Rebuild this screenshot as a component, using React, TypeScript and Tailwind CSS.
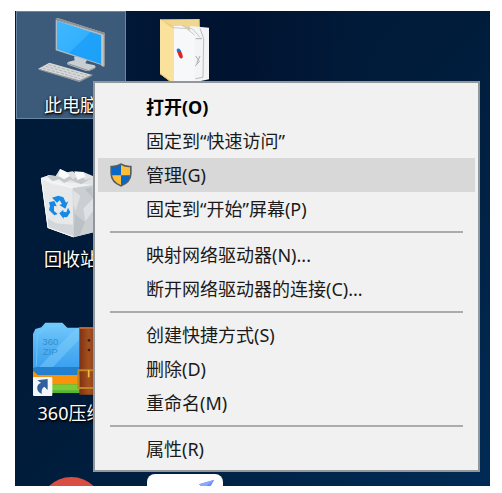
import type { ReactNode } from "react";

function ComputerIcon() {
  return (
    <svg viewBox="93 42 240 240" className="size-20" aria-hidden="true">
      <defs>
        <linearGradient id="screen" x1="0" y1="0" x2="1" y2="1">
          <stop offset="0" stopColor="#3fb8ff" />
          <stop offset="0.5" stopColor="#35b0fd" />
          <stop offset="0.52" stopColor="#1ea2fb" />
          <stop offset="1" stopColor="#1ba0f8" />
        </linearGradient>
      </defs>
      <path d="M222 170 L236 166 L262 178 L256 190 L284 196 Q290 202 282 207 L268 212 Q260 214 250 210 L204 194 Q198 189 206 185 L224 181Z" fill="#c9ced3" />
      <path d="M204 191 L266 212 L286 203" fill="none" stroke="#8b9298" strokeWidth="3" />
      <path d="M166 57 L173 54 L315 99 L315 198 L309 200 L303 196 L303 106Z" fill="#c3c4c4" />
      <path d="M166 57 L173 54 L315 99 L315 198 L311 199 L311 104Z" fill="#8e9194" />
      <path d="M167 59 L306 103 L306 196 L167 151Z" fill="#aebcc6" />
      <path d="M171 63 L303 106 L303 192 L171 148Z" fill="url(#screen)" />
      <path d="M115 206 L148 188 L277 225 L238 245Z" fill="#d8d9da" />
      <path d="M115 206 L238 241 L277 223 L277 227 L238 246 L115 209Z" fill="#92979b" />
      <g stroke="#aeb2b5" strokeWidth="3" strokeDasharray="10 4" fill="none">
        <path d="M145 194 L262 226" />
        <path d="M137 199 L252 231" />
        <path d="M128 204 L240 236" />
      </g>
    </svg>
  );
}

function FolderIcon() {
  return (
    <svg viewBox="435 42 240 240" className="size-20" aria-hidden="true">
      <path d="M480 58 L599 57 L600 90 L520 250 L480 222Z" fill="#e9cc7c" />
      <path d="M486 60 L596 60 L596 85 L522 80Z" fill="#f0d68f" />
      <path d="M570 78 L627 83 L627 238 L570 250Z" fill="#f2f4f6" />
      <path d="M600 85 L611 116 L609 232 L586 236" fill="none" stroke="#b8bec4" strokeWidth="3" />
      <path d="M587 116 H606 M587 168 L598 184 L586 198 M600 168 L590 190" fill="none" stroke="#a6acb1" strokeWidth="3" />
      <path d="M521 78 L545 77 L584 101 L584 248 L521 252Z" fill="#f7f8f9" />
      <path d="M521 83 L560 86 L584 105 M545 76 L578 87 L600 112" stroke="#c7cbce" strokeWidth="3" fill="none" />
      <path d="M480 58 L522 88 L522 254 L480 221Z" fill="#fbe29c" />
      <path d="M480 221 L522 252" stroke="#d8b65d" strokeWidth="3" />
      <ellipse cx="537" cy="154" rx="6" ry="9" fill="#2475cf" transform="rotate(-25 537 154)" />
      <ellipse cx="541" cy="164" rx="6" ry="12" fill="#df2420" transform="rotate(-20 541 164)" />
    </svg>
  );
}

function RecycleBinIcon() {
  return (
    <svg viewBox="63 54 240 240" className="size-20" aria-hidden="true">
      <path d="M93 84 L116 76 L137 78 L150 57 L171 67 L188 64 L204 75 L220 66 L247 77 L290 96 L278 240 L190 262 L113 233Z" fill="#dfe1e3" />
      <path d="M93 84 L116 76 L137 78 L160 95 L250 105 L290 96 L286 118 L188 116 L98 104Z" fill="#eff0f1" />
      <path d="M112 78 L127 94 L147 88 L163 99 L181 89 L213 103 L246 84 L225 90 L214 74 L188 87 L171 68 L154 82 L137 78Z" fill="#c3c8cb" />
      <path d="M150 57 L146 78 L162 88 L180 78 L171 67Z M193 64 L202 90 L226 80 L220 66Z" fill="#f9fafa" />
      <path d="M93 84 L120 101 L188 114 L191 261 L113 233Z" fill="#e6e8e9" />
      <path d="M188 114 L285 100 L278 240 L190 262Z" fill="#cbcfd2" />
      <path d="M189 121 L211 137 L197 183 L190 164Z M220 176 L258 136 L253 177 L226 214Z" fill="#dfe2e4" />
      <path d="M194 191 L225 216 L210 254 L191 261Z M224 117 L245 111 L249 143Z" fill="#bbc2c6" />
      <path d="M113 205 L137 220 L188 224 L190 262 L113 233Z" fill="#d3d7da" />
      <path d="M94 85 L114 233 L190 260 M94 85 L188 114" stroke="#fafafa" strokeWidth="3" fill="none" />
      <g fill="#1688e5">
        <path d="M126 143 L145 137 L160 142 L168 158 L175 154 L166 176 L148 165 L156 162 L149 151 L141 158Z" />
        <path d="M117 157 L133 153 L140 169 L132 168 L132 183 L143 192 L133 196 L117 180 L120 168Z" />
        <path d="M148 190 L160 179 L160 185 L169 187 L174 173 L181 187 L171 202 L161 201 L161 207Z" />
      </g>
    </svg>
  );
}

function ZipIcon() {
  return (
    <svg viewBox="63 36 240 240" className="size-20" aria-hidden="true">
      <defs>
        <linearGradient id="zip" x1="0" y1="0" x2="0" y2="1">
          <stop offset="0" stopColor="#74cbfb" />
          <stop offset="0.55" stopColor="#4cadf2" />
          <stop offset="1" stopColor="#329af0" />
        </linearGradient>
        <linearGradient id="belt" x1="0" y1="0" x2="1" y2="0">
          <stop offset="0" stopColor="#7d3213" />
          <stop offset="0.5" stopColor="#a6501f" />
          <stop offset="1" stopColor="#81371a" />
        </linearGradient>
      </defs>
      <path d="M69 190 H285 V240 Q285 249 277 249 H69Z" fill="#58b632" />
      <path d="M125 224 H285 V241 H125Z" fill="#7acb3a" />
      <path d="M69 183 H285 V223 H69Z" fill="#fb920b" />
      <path d="M69 72 L76 57 L94 52 L106 38 H157 L172 53 H278 L285 62 V185 L276 195 H84 L69 181Z" fill="url(#zip)" />
      <path d="M69 174 L80 171 H285 V185 L276 195 H84 L69 183Z" fill="#2280cf" />
      <path d="M184 68 L208 52 V88 L129 171 H88Z" fill="#83d0fb" opacity="0.45" />
      <path d="M79 169 L82 72 L98 63 L110 50 H152" fill="none" stroke="#79cdfb" strokeWidth="2" />
      <g fill="#358ecb" fontFamily='"Liberation Sans", sans-serif' fontSize="29">
        <text x="97" y="105">360</text>
        <text x="98" y="136">ZIP</text>
      </g>
      <path d="M208 51 H264 V254 H208Z" fill="url(#belt)" />
      <path d="M208 51 H264 V57 H208Z" fill="#bd652a" />
      <circle cx="237" cy="91" r="4" fill="#351c11" />
      <circle cx="237" cy="120" r="4" fill="#351c11" />
      <path d="M205 181 H262 V234 H205Z" fill="none" stroke="#bf8621" strokeWidth="6" />
      <path d="M236 180 V202" stroke="#efbd45" strokeWidth="5" />
      <rect x="69" y="201" width="58" height="57" rx="3" fill="#f5f6f7" />
      <path d="M82 211 L113 207 V240 L103 230 Q92 237 96 252 Q79 246 82 229 Q84 222 93 218Z" fill="#315f9d" />
    </svg>
  );
}

function RedAppIcon() {
  return (
    <svg viewBox="63 138 240 240" className="size-20" aria-hidden="true">
      <circle cx="184" cy="238" r="97" fill="#da4d43" />
    </svg>
  );
}

function WhiteAppIcon() {
  return (
    <svg viewBox="405 138 240 240" className="size-20 overflow-visible" aria-hidden="true">
      <rect x="411" y="132" width="228" height="228" rx="24" fill="#fff" />
      <path d="M567 163 L613 149 L593 184Z" fill="#688cff" />
      <path d="M567 163 L613 149 L580 175Z" fill="#8ba7ff" />
    </svg>
  );
}

function ShieldIcon() {
  return (
    <svg viewBox="0 0 66 72" className="h-6 w-[22px]" aria-hidden="true">
      <defs>
        <clipPath id="shield">
          <path d="M33 6 Q46 14 60 13 V32 Q60 55 33 66 Q6 55 6 32 V13 Q20 14 33 6Z" />
        </clipPath>
      </defs>
      <path d="M33 1 Q48 10 65 8 V32 Q64 59 33 71 Q2 59 1 32 V8 Q18 10 33 1Z" fill="#545e64" />
      <g clipPath="url(#shield)">
        <path d="M0 0H33V37H0Z M33 37H66V72H33Z" fill="#0868c8" />
        <path d="M33 0H66V37H33Z M0 37H33V72H0Z" fill="#ffbd36" />
      </g>
    </svg>
  );
}

type ShortcutProps = { label?: string; name: string; selected?: boolean; place: string; children: ReactNode };

function Shortcut({ label, name, selected, place, children }: ShortcutProps) {
  return (
    <button
      type="button"
      aria-label={label ? undefined : name}
      className={`flex h-[108px] flex-col items-center border pt-0.5 ${place} ${
        selected ? "border-[#6688a3] bg-[#3c5a79]" : "border-transparent"
      }`}
    >
      {children}
      {label && (
        <span className="text-lg leading-[22px] whitespace-nowrap text-white [text-shadow:1px_1px_2px_#000,0_1px_3px_#000]">
          {label}
        </span>
      )}
    </button>
  );
}

type Entry = { text: string; bold?: boolean; active?: boolean };

const groups: Entry[][] = [
  [
    { text: "打开(O)", bold: true },
    { text: "固定到“快速访问”" },
    { text: "管理(G)", active: true },
    { text: "固定到“开始”屏幕(P)" },
  ],
  [{ text: "映射网络驱动器(N)..." }, { text: "断开网络驱动器的连接(C)..." }],
  [{ text: "创建快捷方式(S)" }, { text: "删除(D)" }, { text: "重命名(M)" }],
  [{ text: "属性(R)" }],
];

function ContextMenu() {
  return (
    <div
      role="menu"
      className="absolute top-[70px] right-[10px] left-[78px] border-2 border-[#92979c] bg-[#f1f1f1] px-[3px] pt-[7px] pb-1 text-lg text-[#1a1a1a]"
    >
      {groups.map((group, index) => (
        <div key={index} role="group">
          {index > 0 && <hr className="mx-3 my-[5px] border-t-2 border-[#ababab]" />}
          {group.map((entry) => (
            <button
              key={entry.text}
              type="button"
              role="menuitem"
              className={`flex h-[34px] w-full items-center text-left whitespace-nowrap ${
                entry.active ? "bg-[#d8d8d8]" : ""
              } ${entry.bold ? "font-bold text-black" : ""}`}
            >
              <span className="flex w-12 shrink-0 pl-3">{entry.active && <ShieldIcon />}</span>
              {entry.text}
            </button>
          ))}
        </div>
      ))}
    </div>
  );
}

export default function App() {
  return (
    <div className="flex h-screen bg-white pt-[11px] pr-3 pb-[7px] pl-[15px] font-['Noto_Sans','Noto_Sans_CJK_SC',sans-serif]">
      <main className="relative flex-1 overflow-hidden bg-linear-to-br from-[#001a38] via-[#001c3b] to-[#002b55]">
        <div className="grid auto-rows-[154px] grid-cols-[110px_110px] items-start gap-x-1 bg-radial-[at_45%_5%] from-[#001330] to-transparent to-40% pl-px">
          <Shortcut name="此电脑" label="此电脑" selected place="col-start-1 row-start-1">
            <ComputerIcon />
          </Shortcut>
          <Shortcut name="文件夹" place="col-start-2 row-start-1">
            <FolderIcon />
          </Shortcut>
          <Shortcut name="回收站" label="回收站" place="col-start-1 row-start-2">
            <RecycleBinIcon />
          </Shortcut>
          <Shortcut name="360压缩" label="360压缩" place="col-start-1 row-start-3">
            <ZipIcon />
          </Shortcut>
          <Shortcut name="应用" place="col-start-1 row-start-4">
            <RedAppIcon />
          </Shortcut>
          <Shortcut name="应用" place="col-start-2 row-start-4">
            <WhiteAppIcon />
          </Shortcut>
        </div>
        <ContextMenu />
      </main>
    </div>
  );
}
